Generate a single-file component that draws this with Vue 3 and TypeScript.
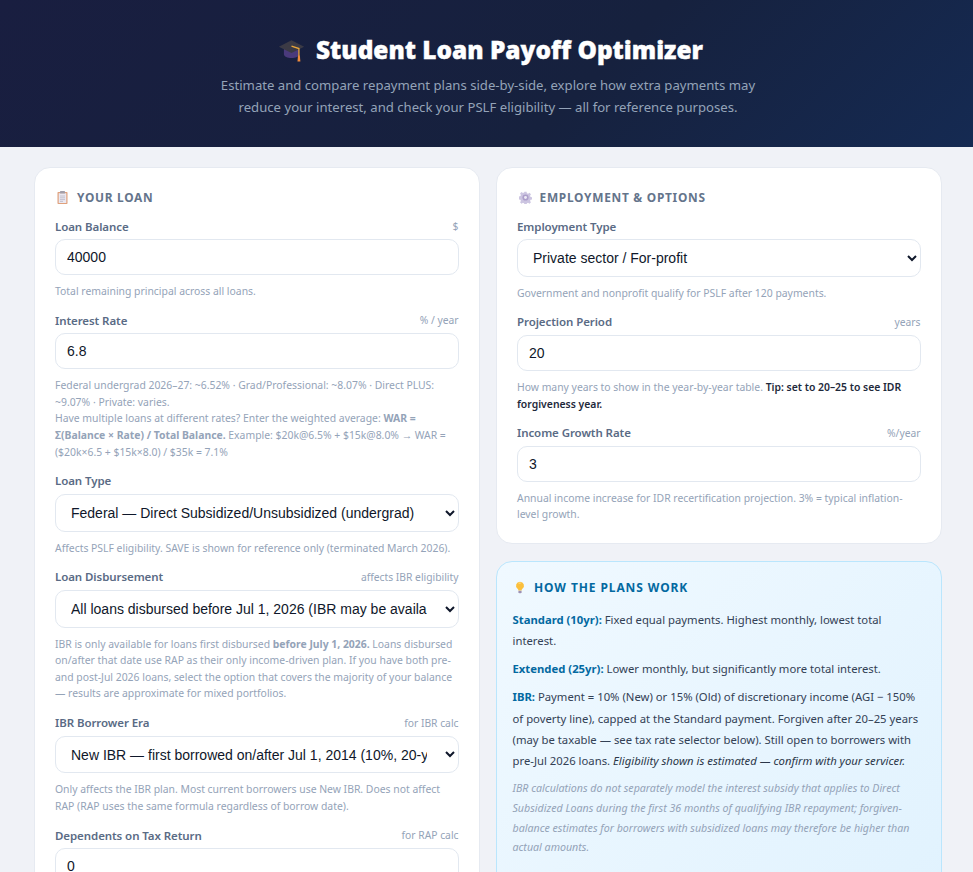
<script setup lang="ts">
import { ref } from 'vue'

const balance = ref(40000)
const rate = ref(6.8)
const loanType = ref('direct')
const disbursement = ref('before')
const era = ref('new')
const dependents = ref(0)
const employment = ref('private')
const years = ref(20)
const growth = ref(3)
</script>

<template>
  <div class="page">
    <header class="hero">
      <h1 class="title">
        <svg class="cap" viewBox="0 0 32 28" aria-hidden="true">
          <path d="M7 12v7c0 2.600 4.200 4.500 9 4.500s9-1.900 9-4.500v-7z" fill="#4a3a7c" />
          <path d="M1 10 16 2.500 31 10 16 17.500z" fill="#3b3a45" />
          <path d="M16 9.300 24.800 12.300V21" fill="none" stroke="#eaa63a" stroke-width="1.500" />
          <path d="M23.700 20.500h2.200l.6 7h-3.400z" fill="#f08a3c" />
        </svg>
        <span>Student Loan Payoff Optimizer</span>
      </h1>
      <p class="lead">
        Estimate and compare repayment plans side-by-side, explore how extra payments may<br />
        reduce your interest, and check your PSLF eligibility — all for reference purposes.
      </p>
    </header>

    <main class="grid">
      <section class="card">
        <h2 class="card-title">
          <svg class="ico clip" viewBox="0 0 11 13" aria-hidden="true">
            <rect x=".5" y="1" width="10" height="12" rx=".8" fill="#d98a5c" />
            <rect x="1.700" y="2.200" width="7.600" height="9.800" fill="#e6e3ee" />
            <rect x="3" y="0" width="5" height="2.600" rx=".6" fill="#8b8794" />
            <path d="M3 5h5M3 6.800h5M3 8.600h5M3 10.400h3" stroke="#a9a6b8" stroke-width=".8" />
          </svg>
          YOUR LOAN
        </h2>

        <div class="field">
          <div class="label-row"><label>Loan Balance</label><span class="unit">$</span></div>
          <input v-model="balance" class="control" type="number" />
          <p class="hint">Total remaining principal across all loans.</p>
        </div>

        <div class="field">
          <div class="label-row"><label>Interest Rate</label><span class="unit">% / year</span></div>
          <input v-model="rate" class="control" type="number" step="0.1" />
          <p class="hint">
            Federal undergrad 2026–27: ~6.52% · Grad/Professional: ~8.07% · Direct PLUS: ~9.07% · Private: varies.<br />
            Have multiple loans at different rates? Enter the weighted average: <strong>WAR = Σ(Balance × Rate) / Total Balance.</strong>
            Example: $20k@6.5% + $15k@8.0% → WAR = ($20k×6.5 + $15k×8.0) / $35k = 7.1%
          </p>
        </div>

        <div class="field">
          <div class="label-row"><label>Loan Type</label></div>
          <select v-model="loanType" class="control select">
            <option value="direct">Federal — Direct Subsidized/Unsubsidized (undergrad)</option>
            <option value="grad">Federal — Direct Grad/Professional</option>
            <option value="private">Private</option>
          </select>
          <p class="hint">Affects PSLF eligibility. SAVE is shown for reference only (terminated March 2026).</p>
        </div>

        <div class="field">
          <div class="label-row"><label>Loan Disbursement</label><span class="unit">affects IBR eligibility</span></div>
          <select v-model="disbursement" class="control select">
            <option value="before">All loans disbursed before Jul 1, 2026 (IBR may be available)</option>
            <option value="after">Loans disbursed on/after Jul 1, 2026 (RAP only)</option>
          </select>
          <p class="hint">
            IBR is only available for loans first disbursed <strong>before July 1, 2026.</strong> Loans disbursed
            on/after that date use RAP as their only income-driven plan. If you have both pre- and post-Jul 2026 loans,
            select the option that covers the majority of your balance — results are approximate for mixed portfolios.
          </p>
        </div>

        <div class="field">
          <div class="label-row"><label>IBR Borrower Era</label><span class="unit">for IBR calc</span></div>
          <select v-model="era" class="control select">
            <option value="new">New IBR — first borrowed on/after Jul 1, 2014 (10%, 20-yr)</option>
            <option value="old">Old IBR — first borrowed before Jul 1, 2014 (15%, 25-yr)</option>
          </select>
          <p class="hint">Only affects the IBR plan. Most current borrowers use New IBR. Does not affect RAP (RAP uses the same formula regardless of borrow date).</p>
        </div>

        <div class="field">
          <div class="label-row"><label>Dependents on Tax Return</label><span class="unit">for RAP calc</span></div>
          <input v-model="dependents" class="control" type="number" />
        </div>
      </section>

      <div class="side">
        <section class="card">
          <h2 class="card-title">
            <svg class="ico gear" viewBox="0 0 16 16" aria-hidden="true">
              <path d="M6.700 .8h2.600l.4 2 1.500.6 1.700-1.100 1.800 1.800-1.100 1.700.6 1.500 2 .4v2.600l-2 .4-.6 1.500 1.100 1.700-1.800 1.800-1.700-1.100-1.500.6-.4 2H6.700l-.4-2-1.500-.6-1.700 1.100-1.800-1.800 1.100-1.700-.6-1.500-2-.4V6.700l2-.4.6-1.500-1.100-1.700 1.800-1.800 1.700 1.100 1.500-.6z" fill="#c4bbdc" />
              <circle cx="8" cy="8" r="3.800" fill="#9f8fc2" />
              <circle cx="8" cy="8" r="1.800" fill="#ece8f4" />
            </svg>
            EMPLOYMENT &amp; OPTIONS
          </h2>

          <div class="field">
            <div class="label-row"><label>Employment Type</label></div>
            <select v-model="employment" class="control select">
              <option value="private">Private sector / For-profit</option>
              <option value="gov">Government</option>
              <option value="nonprofit">Nonprofit</option>
            </select>
            <p class="hint">Government and nonprofit qualify for PSLF after 120 payments.</p>
          </div>

          <div class="field">
            <div class="label-row"><label>Projection Period</label><span class="unit">years</span></div>
            <input v-model="years" class="control" type="number" />
            <p class="hint">How many years to show in the year-by-year table. <strong class="dark">Tip: set to 20–25 to see IDR forgiveness year.</strong></p>
          </div>

          <div class="field">
            <div class="label-row"><label>Income Growth Rate</label><span class="unit">%/year</span></div>
            <input v-model="growth" class="control" type="number" />
            <p class="hint">Annual income increase for IDR recertification projection. 3% = typical inflation-level growth.</p>
          </div>
        </section>

        <section class="card info">
          <h2 class="card-title info-title">
            <svg class="ico bulb" viewBox="0 0 14 18" aria-hidden="true">
              <path d="M7 .8a5.600 5.600 0 0 0-3.400 10c.8.7 1.100 1.500 1.200 2.400h4.400c.1-.9.400-1.700 1.200-2.400A5.600 5.600 0 0 0 7 .8z" fill="#fbbf3c" />
              <path d="M5.200 3.500A3.500 3.500 0 0 1 8 2.800" stroke="#ffe9a8" stroke-width="1.200" fill="none" />
              <path d="M4.800 13.500h4.400v2.300l-1.200 1.400H6l-1.200-1.400z" fill="#9d92b4" />
            </svg>
            HOW THE PLANS WORK
          </h2>
          <p><strong>Standard (10yr):</strong> Fixed equal payments. Highest monthly, lowest total interest.</p>
          <p><strong>Extended (25yr):</strong> Lower monthly, but significantly more total interest.</p>
          <p>
            <strong>IBR:</strong> Payment = 10% (New) or 15% (Old) of discretionary income (AGI − 150% of poverty line),
            capped at the Standard payment. Forgiven after 20–25 years (may be taxable — see tax rate selector below).
            Still open to borrowers with pre-Jul 2026 loans. <em>Eligibility shown is estimated — confirm with your servicer.</em>
          </p>
          <p class="note">
            IBR calculations do not separately model the interest subsidy that applies to Direct Subsidized Loans during
            the first 36 months of qualifying IBR repayment; forgiven-balance estimates for borrowers with subsidized
            loans may therefore be higher than actual amounts.
          </p>
          <p><strong>RAP:</strong> The new plan (launched Jul 2026). Payment = 1–10% of your full AGI, minus a credit per dependent.</p>
        </section>
      </div>
    </main>
  </div>
</template>

<style>
html, body {
  margin: 0;
  background: #f0f2f7;
}
</style>

<style scoped>
.page {
  font-family: "Noto Sans", "Open Sans", sans-serif;
  color: #1e293b;
  background: #f0f2f7;
  padding-bottom: 32px;
}
.hero {
  height: 147px;
  box-sizing: border-box;
  padding: 32px 0 0 3px;
  text-align: center;
  background: linear-gradient(135deg, #191e40, #16213e 60%, #152a52);
}
.title {
  margin: 0;
  padding-left: 5px;
  display: flex;
  justify-content: center;
  align-items: center;
  gap: 11px;
  font-size: 24.4px;
  line-height: 36px;
  font-weight: 900;
  color: #fff;
  -webkit-text-stroke: 0.4px #fff;
}
.cap {
  width: 27px;
  height: 24px;
}
.lead {
  margin: 7px 0 0;
  font-size: 13.15px;
  line-height: 21.6px;
  color: #94a3b8;
}
.grid {
  display: grid;
  grid-template-columns: 445.5px 445.5px;
  gap: 16.5px;
  padding: 20px 0 0 34px;
  align-items: start;
}
.side {
  display: flex;
  flex-direction: column;
  gap: 16.5px;
}
.card {
  box-sizing: border-box;
  background: #fff;
  border: 1px solid #e6eaf1;
  border-radius: 16px;
  padding: 20px;
}
.card-title {
  display: flex;
  align-items: center;
  margin: 0 0 12px;
  font-size: 11.9px;
  line-height: 18px;
  font-weight: 700;
  letter-spacing: 0.72px;
  color: #64748b;
}
.ico {
  flex: none;
}
.clip {
  width: 11px;
  height: 13px;
  margin: 0 9px 0 2px;
  opacity: 0.8;
}
.gear {
  width: 13px;
  height: 13px;
  margin: 0 8px 0 1.5px;
  opacity: 0.85;
}
.field {
  margin-bottom: 12.7px;
}
.field:last-child {
  margin-bottom: 0;
}
.label-row {
  display: flex;
  justify-content: space-between;
  align-items: center;
  margin-bottom: 5px;
  height: 16px;
  font-size: 11.5px;
}
.label-row label {
  font-weight: 600;
  letter-spacing: -0.08px;
  color: #5a6b85;
}
.unit {
  font-size: 10.3px;
  color: #94a3b8;
}
.control {
  display: block;
  width: 100%;
  box-sizing: border-box;
  height: 36px;
  padding: 0 15px 0 11px;
  border: 1px solid #e2e8f0;
  border-radius: 10px;
  background: #fff;
  font-family: "Liberation Sans", Arial, sans-serif;
  font-size: 14px;
  color: #0f172a;
  outline: none;
}
.select {
  height: 37.7px;
}
.hint {
  margin: 8px 0 0;
  font-size: 10.4px;
  line-height: 16.6px;
  color: #94a3b8;
}
.hint strong {
  font-weight: 700;
}
.hint .dark {
  color: #1e293b;
  font-weight: 600;
}
.info {
  padding: 17px 15.5px 20px;
  border-color: #bae6fd;
  background: linear-gradient(135deg, #f0f9ff, #e0f2fe);
  font-size: 11.3px;
  line-height: 21.25px;
  color: #334155;
}
.info-title {
  margin-bottom: 12px;
  font-size: 12px;
  letter-spacing: 0.9px;
  color: #0369a1;
}
.bulb {
  width: 10px;
  height: 13px;
  margin: 0 9px 0 2.5px;
}
.info p {
  margin: 0 0 7px;
}
.info strong {
  color: #0369a1;
}
.info em {
  color: #2a3648;
}
.info .note {
  margin-top: 8px;
  font-style: italic;
  font-size: 10.65px;
  line-height: 19.7px;
  color: #94a3b8;
}
</style>
